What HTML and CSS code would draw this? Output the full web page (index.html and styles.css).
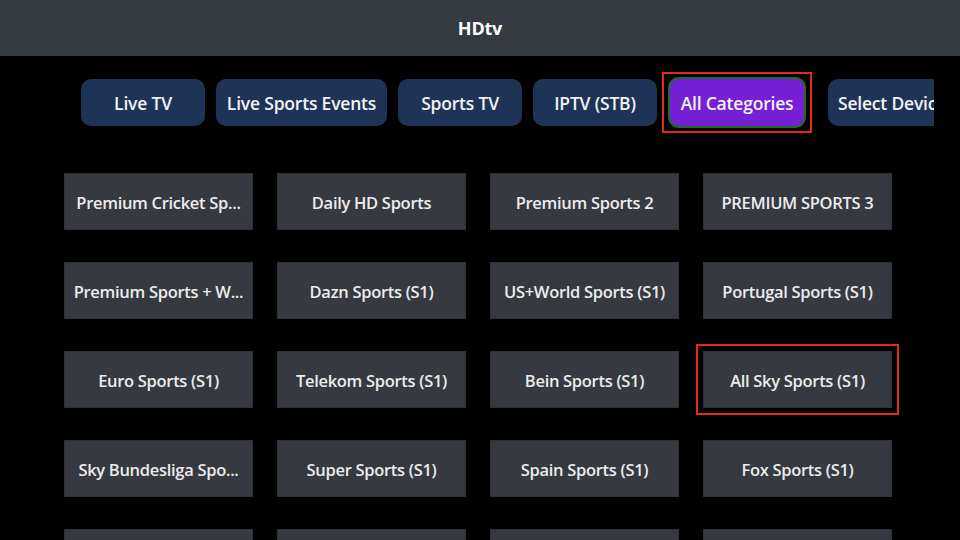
FILE: index.html
```html
<!DOCTYPE html>
<html lang="en">
<head>
<meta charset="utf-8">
<title>HDtv</title>
<link rel="stylesheet" href="styles.css">
</head>
<body>
<header class="topbar"><h1 class="title">HDtv</h1></header>
<nav class="tabs">
  <div class="tab">Live TV</div>
  <div class="tab tab-wide">Live Sports Events</div>
  <div class="tab">Sports TV</div>
  <div class="tab">IPTV (STB)</div>
  <div class="focus-ring"><div class="tab tab-active">All Categories</div></div>
  <div class="tab tab-last">Select Device</div>
</nav>
<main class="content">
  <div class="grid">
    <div class="cell">Premium Cricket Sp...</div>
    <div class="cell">Daily HD Sports</div>
    <div class="cell">Premium Sports 2</div>
    <div class="cell">PREMIUM SPORTS 3</div>
    <div class="cell">Premium Sports + W...</div>
    <div class="cell">Dazn Sports (S1)</div>
    <div class="cell">US+World Sports (S1)</div>
    <div class="cell">Portugal Sports (S1)</div>
    <div class="cell">Euro Sports (S1)</div>
    <div class="cell">Telekom Sports (S1)</div>
    <div class="cell">Bein Sports (S1)</div>
    <div class="cell cell-focus">All Sky Sports (S1)</div>
    <div class="cell">Sky Bundesliga Spo...</div>
    <div class="cell">Super Sports (S1)</div>
    <div class="cell">Spain Sports (S1)</div>
    <div class="cell">Fox Sports (S1)</div>
    <div class="cell"></div>
    <div class="cell"></div>
    <div class="cell"></div>
    <div class="cell"></div>
  </div>
</main>
</body>
</html>
```
FILE: styles.css
```css
* { box-sizing: border-box; }
html, body {
  margin: 0;
  padding: 0;
  width: 960px;
  height: 540px;
  overflow: hidden;
  background: #000;
  font-family: "Open Sans", "Noto Sans", sans-serif;
  color: #ececec;
}
.topbar {
  height: 56px;
  background: #363a41;
  display: flex;
  align-items: center;
  justify-content: center;
}
.title {
  margin: 0;
  font-size: 18px;
  font-weight: 700;
  color: #fff;
  letter-spacing: -0.2px;
}
.tabs {
  display: flex;
  align-items: center;
  gap: 11px;
  margin: 16px 0 0 81px;
  width: 853px;
  height: 61px;
  overflow: hidden;
}
.tab {
  flex: none;
  height: 47px;
  min-width: 124px;
  padding: 0 10px;
  border-radius: 10px;
  background: #1e3456;
  color: #f2f2f2;
  font-size: 17.5px;
  font-weight: 600;
  letter-spacing: -0.2px;
  display: flex;
  align-items: center;
  justify-content: center;
  white-space: nowrap;
}
.tab-wide { width: 171px; }
.focus-ring {
  flex: none;
  margin-left: -6px;
  border: 2px solid #e32b18;
  padding: 3px 4px;
}
.tab-active {
  width: 138px;
  height: 51px;
  background: #7620d6;
  border: 2px solid #1c6b2a;
  border-radius: 11px;
}
.tab-last { margin-left: 5px; }
.content {
  height: 407px;
  overflow: hidden;
}
.grid {
  display: grid;
  grid-template-columns: repeat(4, 189px);
  grid-auto-rows: 57px;
  column-gap: 24px;
  row-gap: 32px;
  padding: 40px 0 0 64px;
}
.cell {
  background: #363a40;
  border: 1px solid #2e3137;
  color: #ececec;
  font-size: 16.5px;
  font-weight: 600;
  letter-spacing: -0.3px;
  display: flex;
  align-items: center;
  justify-content: center;
  padding: 1px 8px 0;
  white-space: nowrap;
  overflow: hidden;
}
.cell-focus {
  outline: 2px solid #e32b18;
  outline-offset: 5px;
  overflow: visible;
}
```
